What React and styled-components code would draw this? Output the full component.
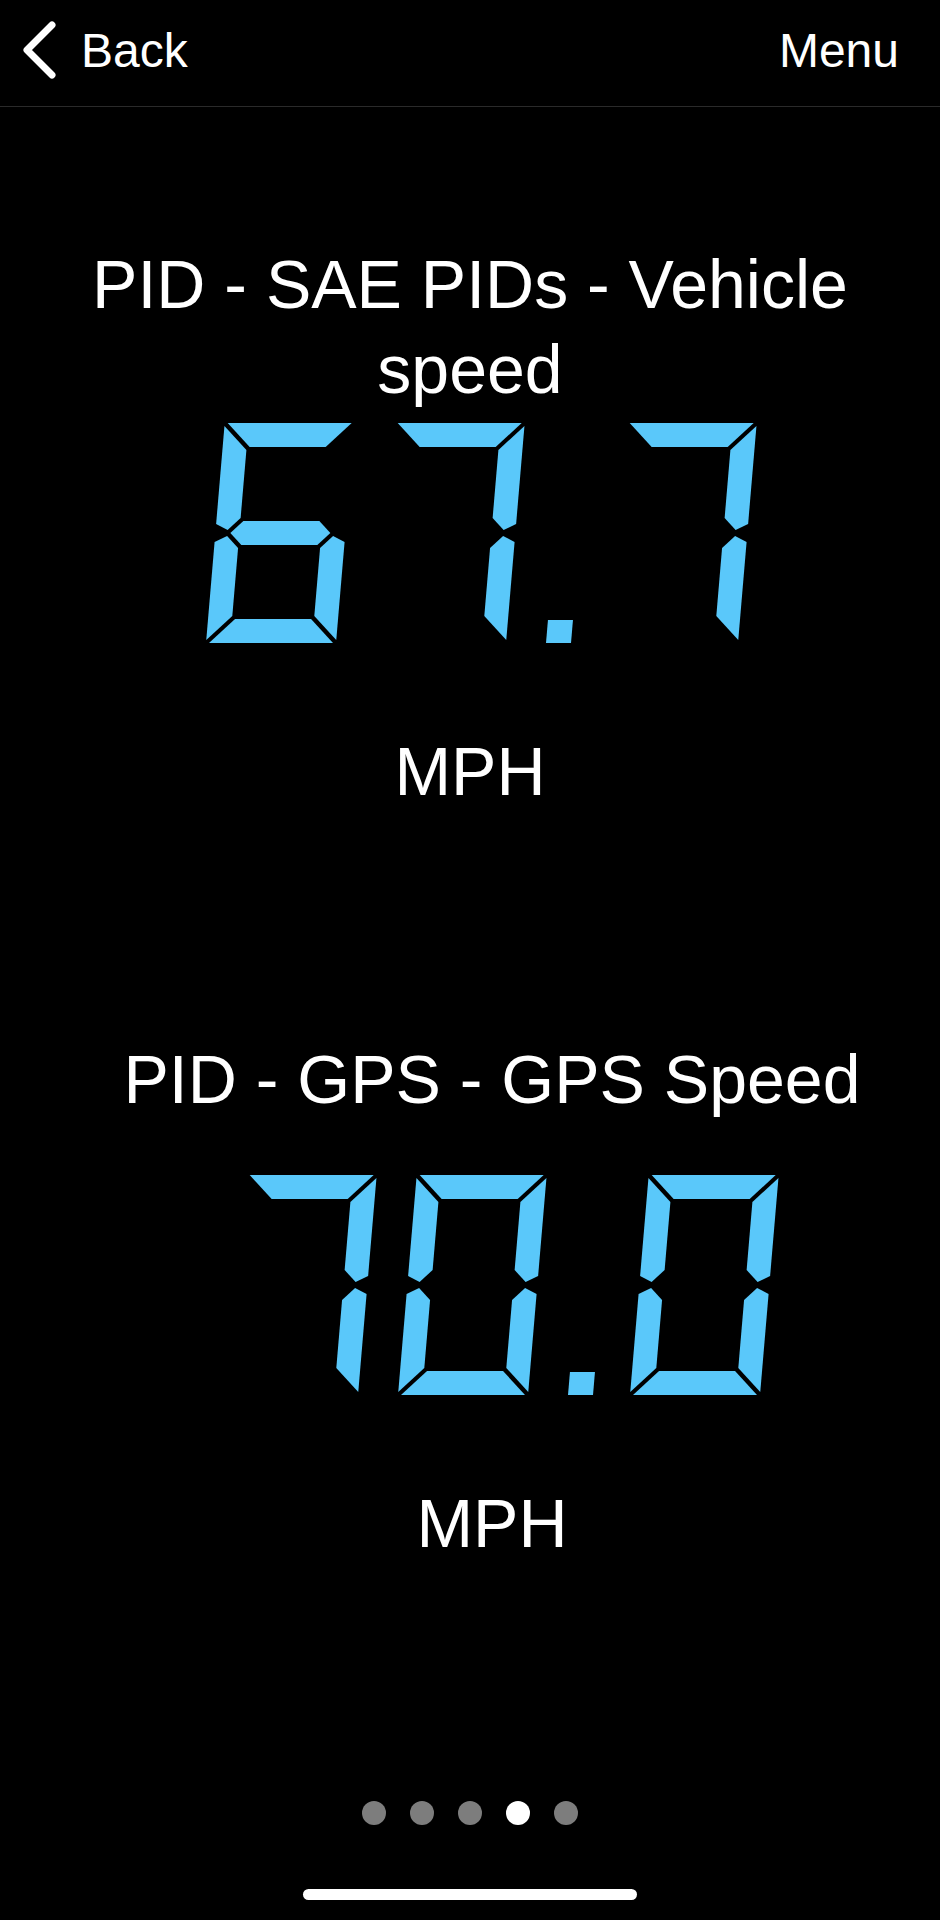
import React from 'react';
import styled, { createGlobalStyle } from 'styled-components';

const GlobalStyle = createGlobalStyle`
  html, body {
    margin: 0;
    padding: 0;
    background: #000;
  }
  body {
    font-family: "Liberation Sans", Arial, sans-serif;
    color: #fff;
  }
`;

const LCD_BLUE = '#5ac8fa';

// seven segment geometry (unskewed, local coords)
const W = 130;
const H = 220;
const T = 24;
const G = 3;
const MID = 110;
const SLANT = 0.085;
const SKEW = (Math.atan(SLANT) * 180) / Math.PI;
const CELL_W = Math.round(W + SLANT * H);

const SEGMENT_POINTS = {
  a: [[G, 0], [W - G, 0], [W - T - G, T], [T + G, T]],
  b: [[W, G], [W, MID - G - T / 4], [W - T / 2, MID - G], [W - T, MID - T / 2 - G], [W - T, T + G]],
  c: [[W, MID + G + T / 4], [W, H - G], [W - T, H - T - G], [W - T, MID + T / 2 + G], [W - T / 2, MID + G]],
  d: [[T + G, H - T], [W - T - G, H - T], [W - G, H], [G, H]],
  e: [[0, MID + G + T / 4], [T / 2, MID + G], [T, MID + T / 2 + G], [T, H - T - G], [0, H - G]],
  f: [[0, G], [T, T + G], [T, MID - T / 2 - G], [T / 2, MID - G], [0, MID - G - T / 4]],
  g: [
    [T / 2 + G, MID],
    [T + G, MID - T / 2],
    [W - T - G, MID - T / 2],
    [W - T / 2 - G, MID],
    [W - T - G, MID + T / 2],
    [T + G, MID + T / 2],
  ],
};

const DIGIT_SEGMENTS = {
  0: 'abcdef',
  1: 'bc',
  2: 'abged',
  3: 'abgcd',
  4: 'fgbc',
  5: 'afgcd',
  6: 'afgedc',
  7: 'abc',
  8: 'abcdefg',
  9: 'abcdfg',
};

const Page = styled.div`
  width: 940px;
  min-height: 1920px;
  background: #000;
  display: flex;
  flex-direction: column;
`;

const Header = styled.header`
  height: 107px;
  box-sizing: border-box;
  padding: 0 41px 6px 21px;
  display: flex;
  align-items: center;
  justify-content: space-between;
  border-bottom: 1px solid #2a2a2a;
`;

const NavButton = styled.div`
  display: flex;
  align-items: center;
  gap: 24px;
  font-size: 48px;
  line-height: 55px;
  color: #fff;
`;

const Chevron = styled.svg`
  display: block;
  width: 36px;
  height: 60px;
`;

const Gauge = styled.section`
  height: 752px;
  box-sizing: border-box;
  display: flex;
  flex-direction: column;
  align-items: center;
  padding-left: ${(p) => p.$shift * 2}px;
`;

const TitleBox = styled.div`
  margin-top: 155px;
  height: 130px;
  display: flex;
  align-items: center;
  justify-content: center;
`;

const Title = styled.h2`
  margin: 0;
  max-width: 800px;
  font-size: 68px;
  line-height: 85px;
  font-weight: 400;
  text-align: center;
  color: #fff;
`;

const DigitRow = styled.div`
  margin-top: 31px;
  padding-left: 22px;
  height: ${H}px;
  display: flex;
  gap: 21px;
`;

const DigitCell = styled.svg`
  display: block;
  flex: none;
`;

const Unit = styled.div`
  margin-top: 86px;
  font-size: 68px;
  line-height: 85px;
  color: #fff;
`;

const Pager = styled.div`
  margin-top: 190px;
  display: flex;
  justify-content: center;
  gap: 24px;
`;

const Dot = styled.span`
  width: 24px;
  height: 24px;
  border-radius: 50%;
  background: ${(p) => (p.$active ? '#fff' : '#7d7d7d')};
`;

const HomeIndicator = styled.div`
  margin: 64px auto 0;
  width: 334px;
  height: 11px;
  border-radius: 6px;
  background: #fff;
`;

const toPoints = (pts) => pts.map(([x, y]) => `${x},${y}`).join(' ');

const Digit = ({ char }) => {
  const lit = DIGIT_SEGMENTS[char] || '';
  return (
    <DigitCell width={CELL_W} height={H} viewBox={`0 0 ${CELL_W} ${H}`}>
      <g transform={`translate(${SLANT * H} 0) skewX(${-SKEW})`} fill={LCD_BLUE}>
        {lit.split('').map((s) => (
          <polygon key={s} points={toPoints(SEGMENT_POINTS[s])} />
        ))}
      </g>
    </DigitCell>
  );
};

const Decimal = () => (
  <DigitCell width={41} height={H} viewBox={`0 0 41 ${H}`}>
    <g transform={`translate(${SLANT * H} 0) skewX(${-SKEW})`} fill={LCD_BLUE}>
      <rect x={0} y={H - 23} width={25} height={23} />
    </g>
  </DigitCell>
);

// lcd style readout, value kept in aria-label
const SegmentDisplay = ({ value }) => (
  <DigitRow role="img" aria-label={value} title={value}>
    {value.split('').map((ch, i) =>
      ch === '.' ? <Decimal key={i} /> : <Digit key={i} char={ch} />
    )}
  </DigitRow>
);

const gauges = [
  { id: 1, title: 'PID - SAE PIDs - Vehicle speed', value: '67.7', unit: 'MPH', shift: 0 },
  { id: 2, title: 'PID - GPS - GPS Speed', value: '70.0', unit: 'MPH', shift: 22 },
];

const App = () => {
  return (
    <>
      <GlobalStyle />
      <Page>
        <Header>
          <NavButton>
            <Chevron viewBox="0 0 36 60">
              <polyline
                points="31,5 6,30 31,55"
                fill="none"
                stroke="#fff"
                strokeWidth="7"
                strokeLinecap="round"
                strokeLinejoin="round"
              />
            </Chevron>
            Back
          </NavButton>
          <NavButton>Menu</NavButton>
        </Header>

        {gauges.map((g) => (
          <Gauge key={g.id} $shift={g.shift}>
            <TitleBox>
              <Title>{g.title}</Title>
            </TitleBox>
            <SegmentDisplay value={g.value} />
            <Unit>{g.unit}</Unit>
          </Gauge>
        ))}

        <Pager>
          {[0, 1, 2, 3, 4].map((i) => (
            <Dot key={i} $active={i === 3} />
          ))}
        </Pager>
        <HomeIndicator />
      </Page>
    </>
  );
};

export default App;
